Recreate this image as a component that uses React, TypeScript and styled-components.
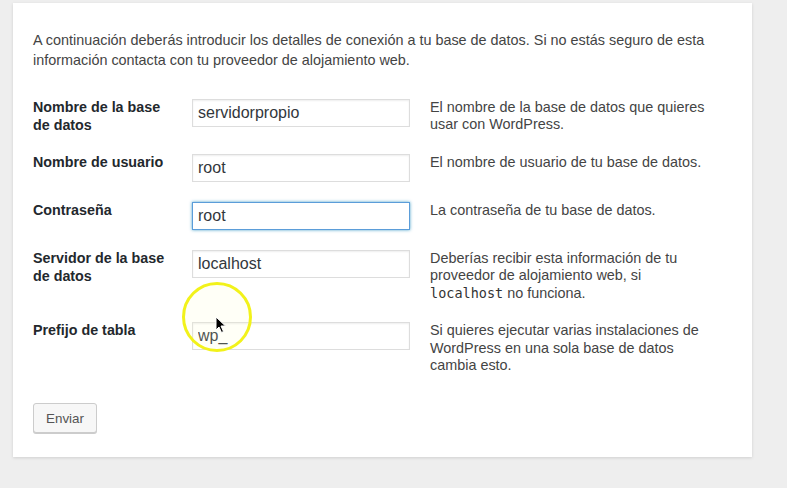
import styled, { createGlobalStyle, css } from "styled-components";

const GlobalStyle = createGlobalStyle`
  html, body {
    margin: 0;
    background: #eeeeee;
  }
  body {
    font-family: "Liberation Sans", Arial, sans-serif;
    color: #444;
  }
`;

const Page = styled.div`
  width: 787px;
  height: 488px;
  overflow: hidden;
  padding: 3px 0 0 13px;
  box-sizing: border-box;
`;

const Card = styled.form`
  position: relative;
  width: 739px;
  box-sizing: border-box;
  background: #fff;
  padding: 27px 20px 24px;
  box-shadow: 0 1px 3px rgba(0, 0, 0, 0.13);
`;

const Intro = styled.p`
  margin: 0 0 18px;
  width: 690px;
  font-size: 14.4px;
  line-height: 20px;
`;

const FormTable = styled.div`
  display: flex;
  flex-direction: column;
`;

const Row = styled.div`
  display: grid;
  grid-template-columns: 159px 218px 300px;
  padding: 9.5px 0;
  align-items: start;
`;

const Label = styled.label`
  width: 140px;
  font-size: 14.3px;
  line-height: 18px;
  font-weight: 700;
  color: #23282d;
`;

const Field = styled.input<{ $focus?: boolean }>`
  display: block;
  box-sizing: border-box;
  width: 218px;
  height: 28px;
  margin: 1px 0 0;
  padding: 2px 5px;
  border: 1px solid #ddd;
  box-shadow: inset 0 1px 2px rgba(0, 0, 0, 0.07);
  font-family: "Liberation Sans", Arial, sans-serif;
  font-size: 16px;
  color: #32373c;
  background: #fff;
  outline: none;
  ${(p) =>
    p.$focus &&
    css`
      border-color: #5b9dd9;
      box-shadow: 0 0 3px rgba(30, 140, 190, 0.8);
    `}
`;

const Desc = styled.p`
  margin: 0;
  padding: 1px 0 0 20px;
  width: 280px;
  font-size: 14.4px;
  line-height: 17.5px;
  color: #444;
`;

const Code = styled.code`
  font-family: "DejaVu Sans Mono", monospace;
  font-size: 13.5px;
  color: #333;
`;

const Submit = styled.button`
  margin-top: 19px;
  height: 30px;
  padding: 0 12px;
  box-sizing: border-box;
  border: 1px solid #ccc;
  border-radius: 3px;
  background: #f7f7f7;
  box-shadow: 0 1px 0 #ccc;
  font-family: "Liberation Sans", Arial, sans-serif;
  font-size: 13.4px;
  color: #555;
`;

const Highlight = styled.div`
  position: absolute;
  left: 169px;
  top: 279px;
  width: 64px;
  height: 64px;
  border: 3px solid #f2f21a;
  border-radius: 50%;
  background: rgba(255, 255, 200, 0.15);
  pointer-events: none;
`;

const Cursor = styled.svg`
  position: absolute;
  left: 202px;
  top: 313px;
  pointer-events: none;
`;

const rows = [
  {
    label: "Nombre de la base de datos",
    value: "servidorpropio",
    desc: <>El nombre de la base de datos que quieres usar con WordPress.</>,
  },
  {
    label: "Nombre de usuario",
    value: "root",
    desc: <>El nombre de usuario de tu base de datos.</>,
  },
  {
    label: "Contraseña",
    value: "root",
    focus: true,
    desc: <>La contraseña de tu base de datos.</>,
  },
  {
    label: "Servidor de la base de datos",
    value: "localhost",
    desc: (
      <>
        Deberías recibir esta información de tu proveedor de alojamiento web, si{" "}
        <Code>localhost</Code> no funciona.
      </>
    ),
  },
  {
    label: "Prefijo de tabla",
    value: "wp_",
    desc: (
      <>Si quieres ejecutar varias instalaciones de WordPress en una sola base de datos cambia esto.</>
    ),
  },
];

export default function App() {
  return (
    <Page>
      <GlobalStyle />
      <Card onSubmit={(e) => e.preventDefault()}>
        <Intro>
          A continuación deberás introducir los detalles de conexión a tu base de datos. Si no
          estás seguro de esta información contacta con tu proveedor de alojamiento web.
        </Intro>
        <FormTable>
          {rows.map((r) => (
            <Row key={r.label}>
              <Label>{r.label}</Label>
              <Field defaultValue={r.value} $focus={r.focus} readOnly />
              <Desc>{r.desc}</Desc>
            </Row>
          ))}
        </FormTable>
        <Submit type="submit">Enviar</Submit>
        <Highlight />
        <Cursor width="12" height="18" viewBox="0 0 12 18">
          <path
            d="M1 1 L1 14 L4 11 L6.5 16.5 L8.5 15.5 L6 10 L10.5 10 Z"
            fill="#000"
            stroke="#fff"
            strokeWidth="1"
            strokeLinejoin="round"
          />
        </Cursor>
      </Card>
    </Page>
  );
}
